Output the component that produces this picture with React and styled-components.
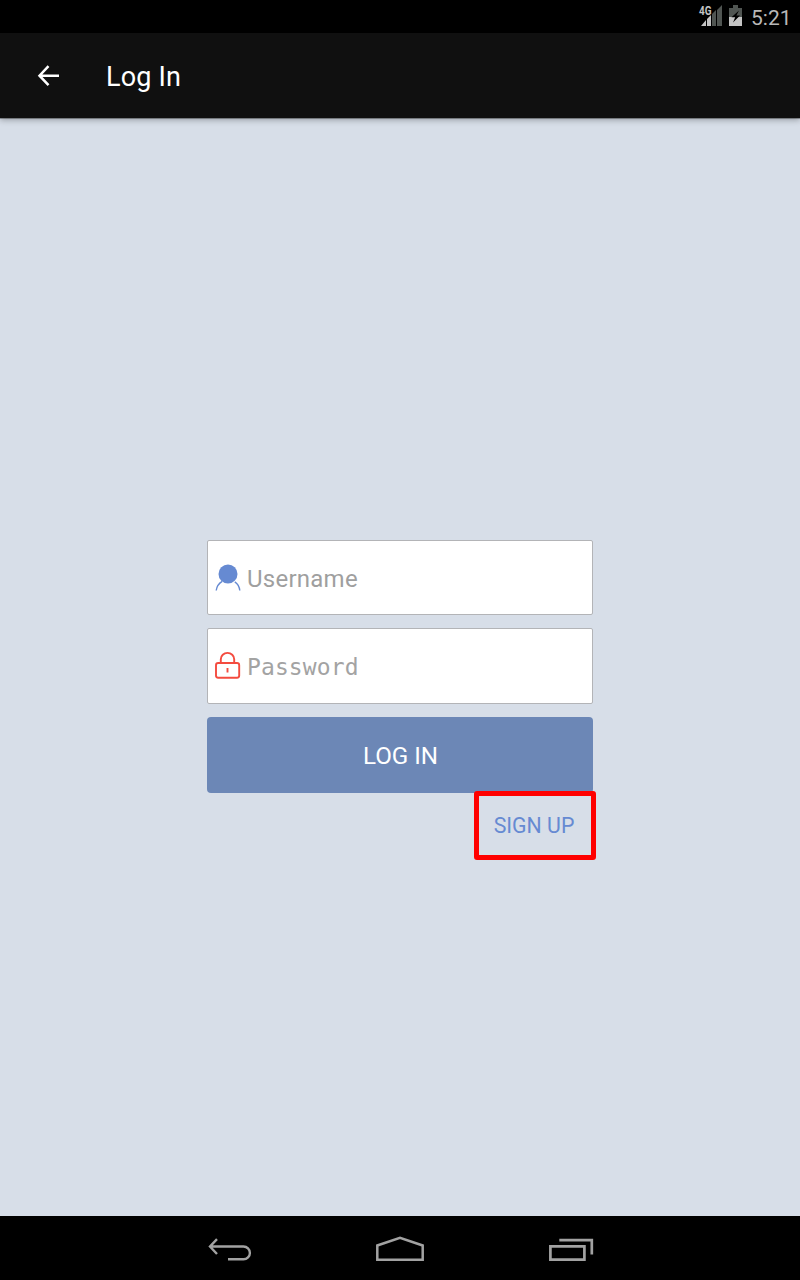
import React from 'react';
import styled, { createGlobalStyle } from 'styled-components';

const GlobalStyle = createGlobalStyle`
  *, *::before, *::after { box-sizing: border-box; }
  body { margin: 0; background: #d7dee8; font-family: Roboto, "Liberation Sans", sans-serif; }
  svg { display: block; flex: none; overflow: visible; }
`;

const Screen = styled.div`
  display: flex;
  flex-direction: column;
  width: 800px;
  height: 1280px;
  background: #d7dee8;
`;

const StatusBar = styled.div`
  display: flex;
  justify-content: flex-end;
  height: 33px;
  flex: none;
  background: #000;
`;

const Clock = styled.span`
  width: 49px;
  padding-top: 2px;
  font-size: 21px;
  line-height: 33px;
  color: #b8b8b8;
`;

const AppBar = styled.header`
  display: flex;
  align-items: center;
  height: 85px;
  flex: none;
  padding-left: 37px;
  background: #101010;
  box-shadow: 0 1px 0 rgba(0, 0, 0, 0.3), 0 2px 6px rgba(0, 0, 0, 0.3);
`;

const Title = styled.h1`
  margin: 0 0 0 46px;
  padding-top: 3px;
  font-size: 27px;
  letter-spacing: 0.15px;
  line-height: 32px;
  font-weight: 400;
  color: #fff;
`;

const Content = styled.main`
  flex: 1;
  display: flex;
  flex-direction: column;
  align-items: center;
  padding-top: 422px;
`;

const Form = styled.div`
  display: flex;
  flex-direction: column;
  width: 386px;
`;

const Field = styled.label`
  display: flex;
  align-items: center;
  height: ${(p) => p.$height}px;
  margin-bottom: ${(p) => p.$gap}px;
  padding-left: 6px;
  border: 1px solid #b3b4b7;
  border-radius: 2px;
  background: #fff;
`;

const Placeholder = styled.span`
  margin-left: 5px;
  padding-top: 2px;
  font-family: ${(p) => (p.$mono ? '"DejaVu Sans Mono", monospace' : 'Roboto, sans-serif')};
  font-size: ${(p) => (p.$mono ? 23 : 24)}px;
  letter-spacing: ${(p) => (p.$mono ? 0.1 : 0.25)}px;
  line-height: 30px;
  color: ${(p) => (p.$mono ? '#a3a3a3' : '#9f9f9f')};
`;

const LoginButton = styled.button`
  height: 76px;
  border: 0;
  border-radius: 4px;
  padding: 2px 0 0 1px;
  background: #6c87b6;
  color: #fff;
  font-family: inherit;
  font-size: 24.2px;
`;

const SignUpFrame = styled.div`
  position: relative;
  align-self: flex-end;
  display: flex;
  width: 122px;
  height: 69px;
  margin: -2px -3px 0 0;
  border: 5px solid #f00;
  border-radius: 3px;
`;

const SignUpButton = styled.button`
  flex: 1;
  padding: 0 2px 0 0;
  border: 0;
  background: #d7dee8;
  color: #668ad2;
  font-family: inherit;
  font-size: 21.3px;
`;

const NavBar = styled.nav`
  display: flex;
  justify-content: center;
  gap: 92px;
  height: 64px;
  flex: none;
  background: #000;
`;

const SignalIcon = () => (
  <svg width="27" height="33" viewBox="0 0 27 33">
    <path d="M23 5v21h-5V10zM17 10v16h-4V14z" fill="#505552" />
    <path d="M12 15v11H8v-7zM7 20v6H2z" fill="#c4c4c4" />
    <text x="0" y="15" fontSize="13" fontWeight="700" textLength="12.5" lengthAdjust="spacingAndGlyphs" fill="#c4c4c4">4G</text>
  </svg>
);

const BatteryIcon = () => (
  <svg width="25" height="33" viewBox="0 0 25 33">
    <path d="M7 5h5v3h4v9H3V8h4z" fill="#505552" />
    <path d="M3 17h13v9H3z" fill="#c4c4c4" />
    <path d="M13 10.5l-7.5 6.8h3.7L7 22.5l7-7h-3.6z" fill="#000" />
  </svg>
);

const ArrowIcon = () => (
  <svg width="23" height="24" viewBox="0 0 23 24" fill="none" stroke="#fff" strokeWidth="2.5">
    <path d="M22 11.7H3M11.5 2.2L2.5 11.7l9 9.5" />
  </svg>
);

const UserIcon = () => (
  <svg width="28" height="32" viewBox="0 0 28 32">
    <circle cx="14" cy="12" r="9.5" fill="#668ad2" />
    <path d="M2.2 28.5q.7-6 6-9.2M25.8 28.5q-.7-6-5-8.7" fill="none" stroke="#668ad2" strokeWidth="1.4" />
  </svg>
);

const LockIcon = () => (
  <svg width="28" height="32" viewBox="0 0 28 32" fill="none" stroke="#f44b3f" strokeWidth="1.9">
    <rect x="2" y="13" width="23.2" height="14.7" rx="2.2" />
    <path d="M6.8 13V9.2a6.7 6.3 0 0 1 13.4 0V13M13.5 18v4.5" />
  </svg>
);

const BackIcon = () => (
  <svg width="44" height="64" viewBox="0 0 44 64" fill="none" stroke="#a2a2a2" strokeWidth="2.4">
    <path d="M4 30.5h33.5a6.4 6.4 0 0 1 0 12.8H22M11 23.2L4 30.5l7 7.5" />
  </svg>
);

const HomeIcon = () => (
  <svg width="80" height="64" viewBox="0 0 80 64" fill="none" stroke="#a2a2a2" strokeWidth="2.5">
    <path d="M35.3 43.7V29.5L58 21.9l22.7 7.6v14.2z" />
  </svg>
);

const RecentsIcon = () => (
  <svg width="80" height="64" viewBox="0 0 80 64" fill="none" stroke="#a2a2a2" strokeWidth="2.7">
    <path d="M36.4 30.4h34v13.3h-34zM45.3 24.1h32.5v14.5" />
  </svg>
);

export default function App() {
  return (
    <Screen>
      <GlobalStyle />
      <StatusBar>
        <SignalIcon />
        <BatteryIcon />
        <Clock>5:21</Clock>
      </StatusBar>
      <AppBar>
        <ArrowIcon />
        <Title>Log In</Title>
      </AppBar>
      <Content>
        <Form>
          <Field $height={75} $gap={13}>
            <UserIcon />
            <Placeholder>Username</Placeholder>
          </Field>
          <Field $height={76} $gap={13}>
            <LockIcon />
            <Placeholder $mono>Password</Placeholder>
          </Field>
          <LoginButton type="button">LOG IN</LoginButton>
          <SignUpFrame>
            <SignUpButton type="button">SIGN UP</SignUpButton>
          </SignUpFrame>
        </Form>
      </Content>
      <NavBar>
        <BackIcon />
        <HomeIcon />
        <RecentsIcon />
      </NavBar>
    </Screen>
  );
}
